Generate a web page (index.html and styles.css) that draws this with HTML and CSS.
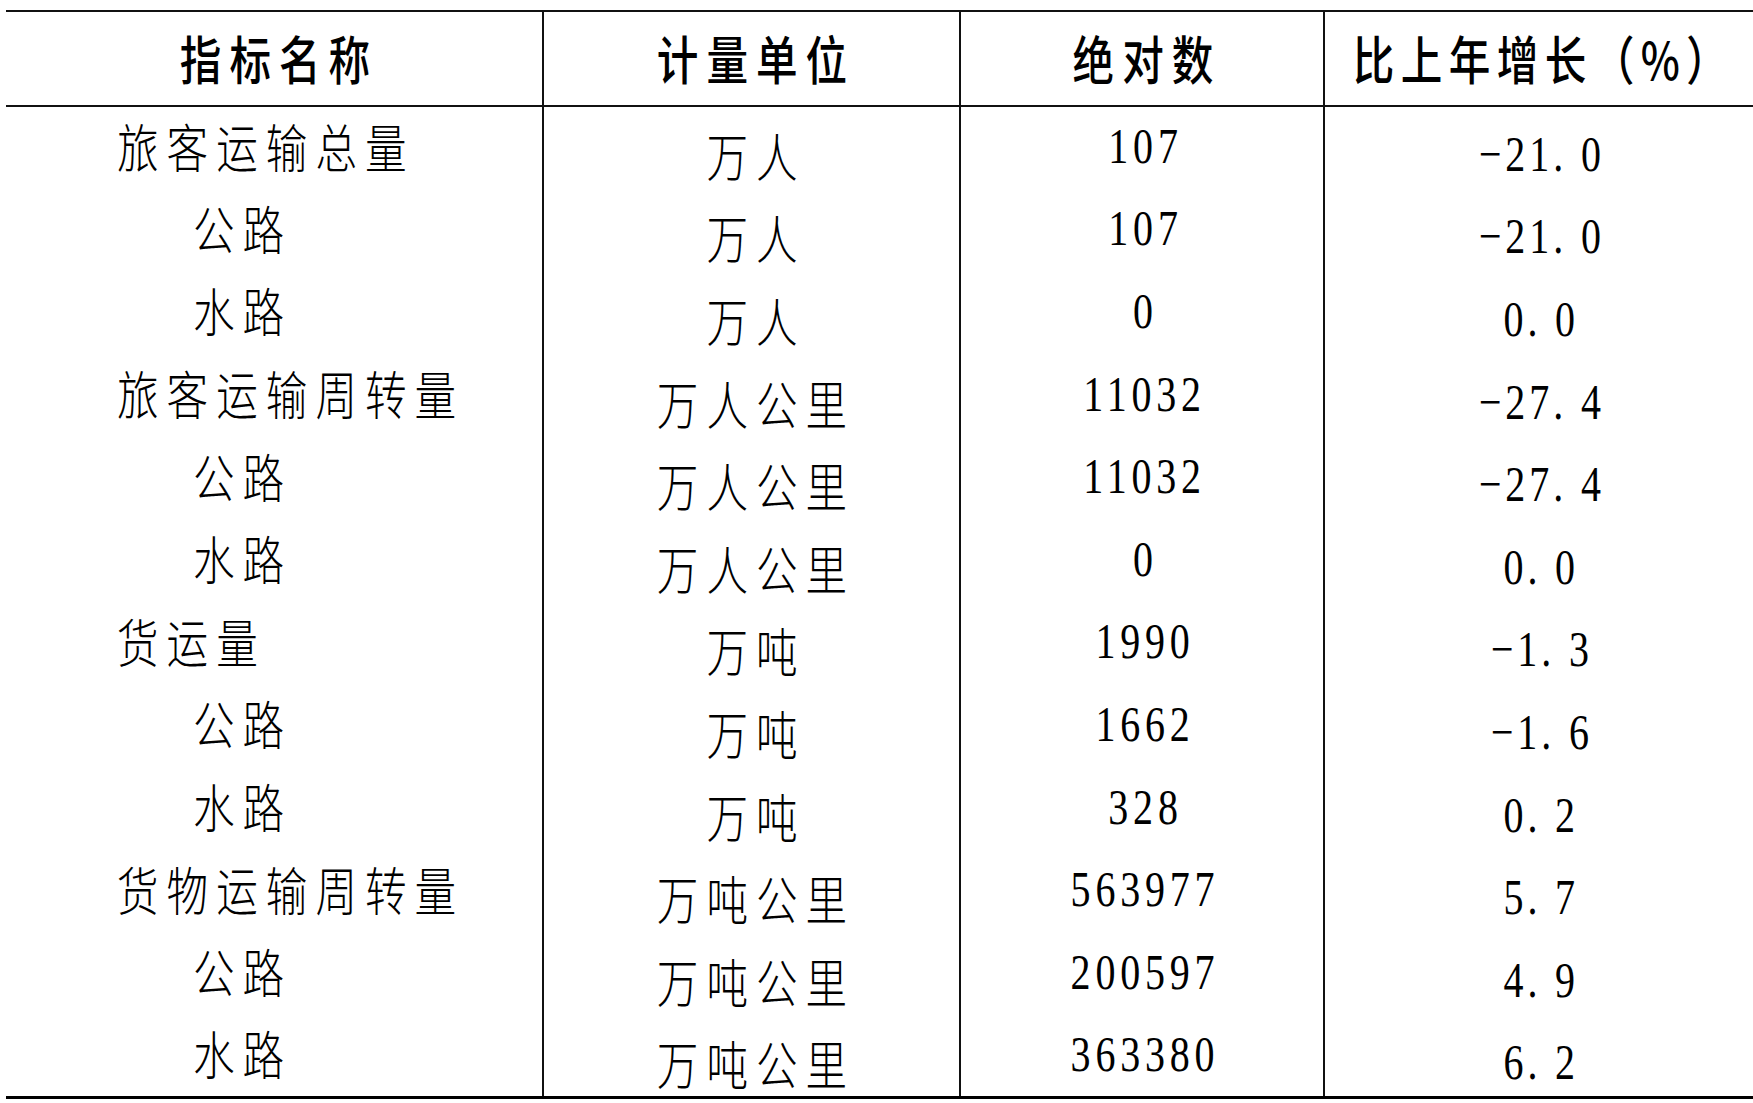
FILE: index.html
```html
<!DOCTYPE html>
<html lang="zh-CN">
<head>
<meta charset="utf-8">
<title>交通运输统计</title>
<link rel="stylesheet" href="styles.css">
</head>
<body>
<table class="stats">
  <colgroup>
    <col class="c-name"><col class="c-unit"><col class="c-abs"><col class="c-pct">
  </colgroup>
  <thead>
    <tr>
      <th><span class="zh">指标名称</span></th>
      <th><span class="zh">计量单位</span></th>
      <th><span class="zh">绝对数</span></th>
      <th class="pct-head"><span class="zh">比上年增长（%）</span></th>
    </tr>
  </thead>
  <tbody>
    <tr><td class="name"><span class="zh">旅客运输总量</span></td><td class="unit"><span class="zh">万人</span></td><td class="abs"><span class="num">107</span></td><td class="pct"><span class="num">−21<span class="dot">.</span>0</span></td></tr>
    <tr><td class="name sub"><span class="zh">公路</span></td><td class="unit"><span class="zh">万人</span></td><td class="abs"><span class="num">107</span></td><td class="pct"><span class="num">−21<span class="dot">.</span>0</span></td></tr>
    <tr><td class="name sub"><span class="zh">水路</span></td><td class="unit"><span class="zh">万人</span></td><td class="abs"><span class="num">0</span></td><td class="pct"><span class="num">0<span class="dot">.</span>0</span></td></tr>
    <tr><td class="name"><span class="zh">旅客运输周转量</span></td><td class="unit"><span class="zh">万人公里</span></td><td class="abs"><span class="num">11032</span></td><td class="pct"><span class="num">−27<span class="dot">.</span>4</span></td></tr>
    <tr><td class="name sub"><span class="zh">公路</span></td><td class="unit"><span class="zh">万人公里</span></td><td class="abs"><span class="num">11032</span></td><td class="pct"><span class="num">−27<span class="dot">.</span>4</span></td></tr>
    <tr><td class="name sub"><span class="zh">水路</span></td><td class="unit"><span class="zh">万人公里</span></td><td class="abs"><span class="num">0</span></td><td class="pct"><span class="num">0<span class="dot">.</span>0</span></td></tr>
    <tr><td class="name"><span class="zh">货运量</span></td><td class="unit"><span class="zh">万吨</span></td><td class="abs"><span class="num">1990</span></td><td class="pct"><span class="num">−1<span class="dot">.</span>3</span></td></tr>
    <tr><td class="name sub"><span class="zh">公路</span></td><td class="unit"><span class="zh">万吨</span></td><td class="abs"><span class="num">1662</span></td><td class="pct"><span class="num">−1<span class="dot">.</span>6</span></td></tr>
    <tr><td class="name sub"><span class="zh">水路</span></td><td class="unit"><span class="zh">万吨</span></td><td class="abs"><span class="num">328</span></td><td class="pct"><span class="num">0<span class="dot">.</span>2</span></td></tr>
    <tr><td class="name"><span class="zh">货物运输周转量</span></td><td class="unit"><span class="zh">万吨公里</span></td><td class="abs"><span class="num">563977</span></td><td class="pct"><span class="num">5<span class="dot">.</span>7</span></td></tr>
    <tr><td class="name sub"><span class="zh">公路</span></td><td class="unit"><span class="zh">万吨公里</span></td><td class="abs"><span class="num">200597</span></td><td class="pct"><span class="num">4<span class="dot">.</span>9</span></td></tr>
    <tr><td class="name sub"><span class="zh">水路</span></td><td class="unit"><span class="zh">万吨公里</span></td><td class="abs"><span class="num">363380</span></td><td class="pct"><span class="num">6<span class="dot">.</span>2</span></td></tr>
  </tbody>
</table>
</body>
</html>
```
FILE: styles.css
```css
html, body {
  margin: 0;
  padding: 0;
  background: #ffffff;
}

body {
  color: #000000;
  font-family: "Noto Sans CJK SC", "Noto Sans", sans-serif;
}

.stats {
  border-collapse: collapse;
  table-layout: fixed;
  width: 1747px;
  margin: 10px 0 0 6px;
}

.c-name { width: 537px; }
.c-unit { width: 417px; }
.c-abs  { width: 364px; }
.c-pct  { width: 429px; }

.stats th,
.stats td {
  padding: 0;
  text-align: center;
  vertical-align: middle;
  white-space: nowrap;
  overflow: visible;
}

.stats th {
  height: 93px;
  border-top: 2px solid #111;
  border-bottom: 2px solid #111;
  font-weight: 500;
}

.stats th + th,
.stats td + td {
  border-left: 2px solid #111;
}

.stats tbody tr {
  height: 82.6px;
}

.stats tbody tr:last-child td {
  border-bottom: 3px solid #000;
}

.zh {
  display: inline-block;
  font-size: 52px;
  line-height: 1;
  letter-spacing: 10px;
  margin-right: -10px;
  transform: scaleX(0.8);
  transform-origin: center;
  font-weight: 300;
}

.stats th .zh {
  font-weight: 500;
}

.stats th.pct-head .zh {
  letter-spacing: 8px;
  margin: 0 -40px 0 -32px;
}

.num {
  display: inline-block;
  font-family: "Liberation Serif", "Times New Roman", serif;
  font-size: 50px;
  line-height: 1;
  letter-spacing: 6px;
  margin-right: -6px;
  transform: scaleX(0.8);
  transform-origin: center;
}

.stats td.pct .num {
  letter-spacing: 5px;
  margin-right: -5px;
}

.stats td.pct .dot {
  letter-spacing: 0;
  margin-right: 22px;
}

.stats td.name {
  text-align: left;
  padding-left: 111px;
  padding-bottom: 3px;
}

.stats td.name.sub {
  padding-left: 187px;
}

.stats td.name .zh {
  transform-origin: left center;
}

.stats td.abs {
  padding-bottom: 3px;
}

.stats td.unit {
  padding-top: 16px;
}

.stats td.pct {
  padding-top: 13px;
}
```
